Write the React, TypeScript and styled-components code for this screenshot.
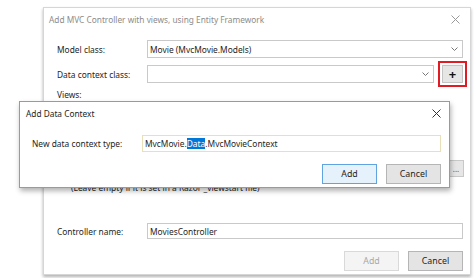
import React from 'react';
import styled, { createGlobalStyle } from 'styled-components';

const Global = createGlobalStyle`
  html, body { margin: 0; padding: 0; background: #ffffff; }
  body { font-family: "Noto Sans", "Segoe UI", sans-serif; font-size: 8.4px; color: #1e1e1e; }
  * { box-sizing: border-box; }
`;

const Stage = styled.div`
  position: relative;
  width: 474px;
  height: 278px;
  overflow: hidden;
  padding: 7px 0 0 43px;
`;

const MainDialog = styled.div`
  width: 428px;
  height: 268px;
  border: 1px solid #d6d6d6;
  background: #ffffff;
  box-shadow: 0 2px 3px rgba(0, 0, 0, 0.3);
  display: flex;
  flex-direction: column;
  padding: 0 7px 3px 13px;
`;

const TitleBar = styled.div<{ $dark?: boolean }>`
  height: 22px;
  display: flex;
  align-items: center;
  justify-content: space-between;
  margin-left: ${p => (p.$dark ? '-6px' : '-8px')};
  color: ${p => (p.$dark ? '#1e1e1e' : '#8c8c8c')};
  font-size: 8.3px;
`;

const CloseX = styled.svg<{ $dark?: boolean }>`
  width: 9px;
  height: 9px;
  margin-right: ${p => (p.$dark ? '0px' : '3px')};
  stroke: ${p => (p.$dark ? '#333' : '#999')};
  stroke-width: 1;
  fill: none;
`;

const Row = styled.div<{ $mt?: number; $h?: number }>`
  display: flex;
  align-items: center;
  margin-top: ${p => p.$mt ?? 0}px;
  height: ${p => p.$h ?? 18}px;
`;

const Label = styled.div<{ $w?: number }>`
  width: ${p => p.$w ?? 90}px;
  flex: none;
  white-space: nowrap;
`;

const Field = styled.div<{ $border?: string }>`
  flex: 1;
  height: 100%;
  border: 1px solid ${p => p.$border ?? '#c9c9c9'};
  background: #fff;
  display: flex;
  align-items: center;
  padding: 0 4px 0 2px;
  white-space: nowrap;
  overflow: hidden;
  font-size: 8.4px;
`;

const FieldText = styled.span`
  flex: 1;
`;

const Chevron = styled.svg`
  width: 7px;
  height: 4px;
  stroke: #777;
  stroke-width: 1;
  fill: none;
  flex: none;
`;

const PlusButton = styled.div`
  width: 21px;
  height: 18px;
  margin-left: 8px;
  flex: none;
  background: #e6e6e6;
  border: 1px solid #c4c4c4;
  outline: 2px solid #e01b24;
  outline-offset: 2px;
  display: flex;
  align-items: center;
  justify-content: center;
  font-weight: 700;
  font-size: 13px;
  color: #111;
`;

const Hidden = styled.div`
  flex: 1;
  display: flex;
  flex-direction: column;
  padding-left: 14px;
`;

const Hint = styled.div`
  margin-top: auto;
  margin-bottom: 30px;
  color: #1e1e1e;
  white-space: nowrap;
`;

const BrowseRow = styled.div`
  display: flex;
  justify-content: flex-end;
  margin-top: 57px;
`;

const SmallButton = styled.div`
  width: 16px;
  height: 17px;
  margin-right: -1px;
  background: #e6e6e6;
  border: 1px solid #c8c8c8;
  font-size: 8px;
  color: #555;
  display: flex;
  align-items: center;
  justify-content: center;
`;

const ButtonRow = styled.div<{ $mt: number }>`
  display: flex;
  justify-content: flex-end;
  gap: 9px;
  margin-top: ${p => p.$mt}px;
`;

const Button = styled.div<{ $variant?: 'default' | 'primary' | 'disabled' }>`
  width: 55px;
  height: 20px;
  display: flex;
  align-items: center;
  justify-content: center;
  font-size: 8.8px;
  border: 1px solid
    ${p => (p.$variant === 'primary' ? '#5fa3e0' : p.$variant === 'disabled' ? '#d9d9d9' : '#b5b5b5')};
  background: ${p => (p.$variant === 'primary' ? '#e5f1fb' : p.$variant === 'disabled' ? '#f4f4f4' : '#e4e4e4')};
  color: ${p => (p.$variant === 'disabled' ? '#a8a8a8' : '#1e1e1e')};
`;

const Overlay = styled.div`
  position: absolute;
  left: 19px;
  top: 101px;
  width: 431px;
  height: 87px;
  background: #ffffff;
  border: 1px solid #9a9a9a;
  box-shadow: 1px 3px 5px rgba(0, 0, 0, 0.3);
  display: flex;
  flex-direction: column;
  padding: 0 8px 0 12px;
`;

const Selected = styled.span`
  background: #0078d7;
  color: #fff;
`;

const X = ({ dark }: { dark?: boolean }) => (
  <CloseX $dark={dark} viewBox="0 0 9 9">
    <path d="M0.5 0.5 L8.5 8.5 M8.5 0.5 L0.5 8.5" />
  </CloseX>
);

const Down = () => (
  <Chevron viewBox="0 0 7 4">
    <path d="M0.5 0.5 L3.5 3.5 L6.5 0.5" />
  </Chevron>
);

export default function App() {
  return (
    <>
      <Global />
      <Stage>
        <MainDialog>
          <TitleBar>
            <span>Add MVC Controller with views, using Entity Framework</span>
            <X />
          </TitleBar>
          <Row $mt={10}>
            <Label>Model class:</Label>
            <Field>
              <FieldText>Movie (MvcMovie.Models)</FieldText>
              <Down />
            </Field>
          </Row>
          <Row $mt={7}>
            <Label>Data context class:</Label>
            <Field>
              <FieldText />
              <Down />
            </Field>
            <PlusButton>+</PlusButton>
          </Row>
          <Row $mt={2} $h={18}>
            <Label>Views:</Label>
          </Row>
          <Hidden>
            <BrowseRow>
              <SmallButton>...</SmallButton>
            </BrowseRow>
            <Hint>(Leave empty if it is set in a Razor _viewstart file)</Hint>
          </Hidden>
          <Row $h={16}>
            <Label>Controller name:</Label>
            <Field>
              <FieldText>MoviesController</FieldText>
            </Field>
          </Row>
          <ButtonRow $mt={12}>
            <Button $variant="disabled">Add</Button>
            <Button>Cancel</Button>
          </ButtonRow>
        </MainDialog>
        <Overlay>
          <TitleBar $dark>
            <span>Add Data Context</span>
            <X dark />
          </TitleBar>
          <Row $mt={11} $h={17}>
            <Label $w={110}>New data context type:</Label>
            <Field $border="#e9dfb8">
              <FieldText>
                MvcMovie.<Selected>Data</Selected>.MvcMovieContext
              </FieldText>
            </Field>
          </Row>
          <ButtonRow $mt={12}>
            <Button $variant="primary">Add</Button>
            <Button>Cancel</Button>
          </ButtonRow>
        </Overlay>
      </Stage>
    </>
  );
}
